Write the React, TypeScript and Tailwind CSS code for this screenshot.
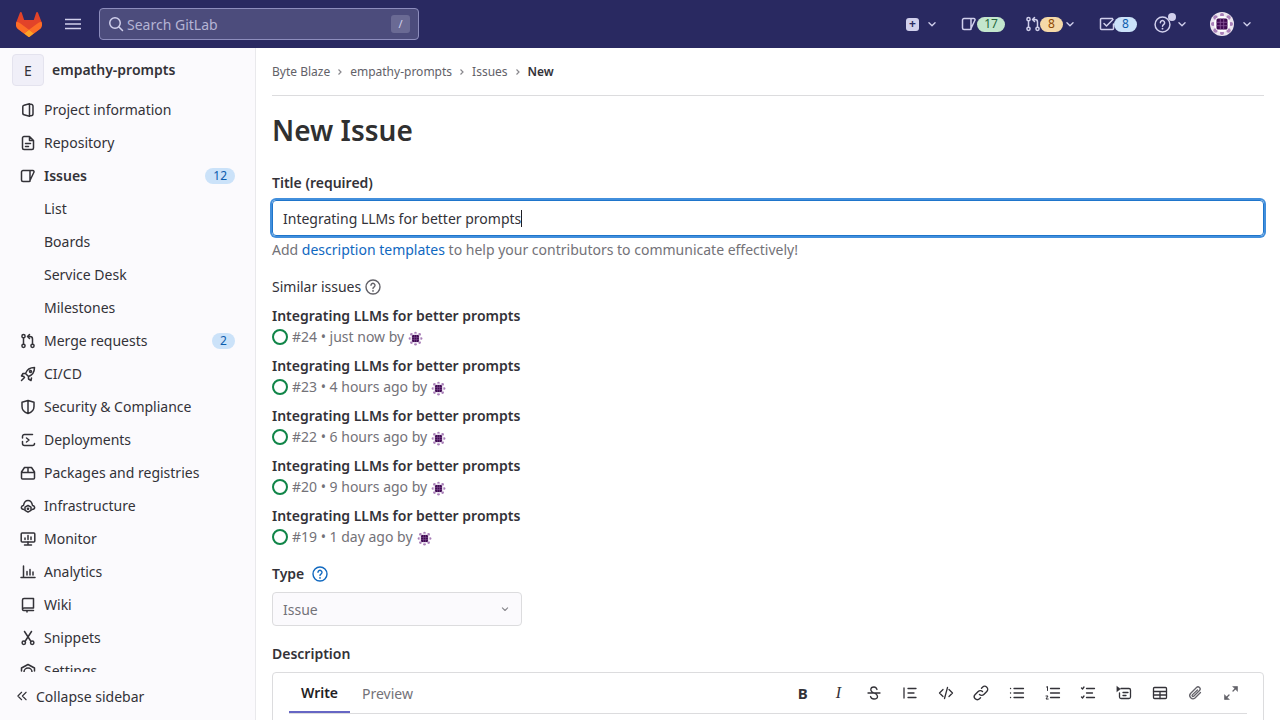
import React from "react";

type IconProps = { className?: string };

function Ico({ className, children }: IconProps & { children: React.ReactNode }) {
  return (
    <svg
      viewBox="0 0 16 16"
      fill="none"
      stroke="currentColor"
      strokeWidth="1.5"
      strokeLinecap="round"
      strokeLinejoin="round"
      className={className ?? "h-4 w-4"}
    >
      {children}
    </svg>
  );
}

const Chevron = ({ className }: IconProps) => (
  <Ico className={className ?? "h-4 w-4"}>
    <path d="M4.5 6.5 8 10l3.5-3.5" />
  </Ico>
);

const IssuesIcon = ({ className }: IconProps) => (
  <Ico className={className}>
    <path d="M3 2.500h9.800a1.200 1.200 0 0 1 1.100 1.800L9.500 13.500H3A1.500 1.500 0 0 1 1.500 12V4A1.500 1.500 0 0 1 3 2.500ZM10 2.700v10.500" />
  </Ico>
);

const MergeIcon = ({ className }: IconProps) => (
  <Ico className={className}>
    <circle cx="3.5" cy="3.2" r="1.6" />
    <circle cx="3.5" cy="12.8" r="1.6" />
    <circle cx="12.5" cy="12.8" r="1.6" />
    <path d="M3.5 5v6M12.5 11V6a2.500 2.500 0 0 0-2.500-2.500H8M9.500 1.500l-2 2 2 2" />
  </Ico>
);

const HelpIcon = ({ className }: IconProps) => (
  <Ico className={className}>
    <circle cx="8" cy="8" r="7" strokeWidth="1.4" />
    <path d="M6 6.300a2 2 0 1 1 3.200 1.600C8.500 8.400 8 8.800 8 9.600" strokeWidth="1.4" />
    <path d="M8 11.800v.1" strokeWidth="1.7" />
  </Ico>
);

const sideIcons: Record<string, React.ReactNode> = {
  info: (
    <Ico>
      <path d="M9.500 1.800 4 3.200a1.500 1.500 0 0 0-1.200 1.400v6.800A1.500 1.500 0 0 0 4 12.800l5.500 1.400V1.800Zm0 .4h1.500a2 2 0 0 1 2 2v7.600a2 2 0 0 1-2 2H9.500" />
    </Ico>
  ),
  repo: (
    <Ico>
      <path d="M9.500 1.500H4A1.500 1.500 0 0 0 2.500 3v10A1.500 1.500 0 0 0 4 14.500h8a1.500 1.500 0 0 0 1.500-1.500V5.500l-4-4ZM9.500 1.500v4h4M5.500 8.500h5M5.500 11.500h3" />
    </Ico>
  ),
  issues: <IssuesIcon />,
  merge: <MergeIcon />,
  cicd: (
    <Ico>
      <path d="M14.500 1.500c-4.500 0-7.500 2-9 6l3 3c4-1.500 6-4.500 6-9ZM5.500 7.500H3l-1.500 2.500 2.500.5M8.500 10.500V13l2.500 1.500.5-2.500M4.500 11.500l-3 3" />
      <circle cx="10.500" cy="5.500" r="1" />
    </Ico>
  ),
  security: (
    <Ico>
      <path d="M8 1.500 14 3.200v4.300c0 3.500-2.500 5.900-6 7-3.500-1.100-6-3.500-6-7V3.200L8 1.500Zm0 0v13" />
    </Ico>
  ),
  deploy: (
    <Ico>
      <path d="M2.500 6V4.500A2 2 0 0 1 4.500 2.500h8M2.500 9.500v2a2 2 0 0 0 2 2h8a2 2 0 0 0 2-2M6.500 6l2.500 2-2.500 2" />
    </Ico>
  ),
  packages: (
    <Ico>
      <path d="M4.500 2.500h7L14.500 7v6a1 1 0 0 1-1 1h-11a1 1 0 0 1-1-1V7l3-4.500ZM1.500 7.500h13M8 2.500v5" />
    </Ico>
  ),
  infra: (
    <Ico>
      <path d="M4 11.500c-1.500 0-3-.8-2.500-2.500.3-1 1-1.500 2-1.500C4 4.500 6 2.500 8 2.500s4 2 4.500 5c1 0 1.700.5 2 1.500.5 1.700-1 2.500-2.500 2.500" />
      <path d="M8 7.500l3 1.700v3.200l-3 1.700-3-1.700V9.200l3-1.700Z" />
      <circle cx="8" cy="10.800" r=".6" />
    </Ico>
  ),
  monitor: (
    <Ico>
      <rect x="1.200" y="2" width="13.600" height="9" rx="1" />
      <path d="M4.500 14h7M8 11v3M5 8.500V7M8 8.500V4.500M11 8.500V6" />
    </Ico>
  ),
  analytics: (
    <Ico>
      <path d="M1 13.500h14M3.500 2v11.500M7 7.500v3.500M10 5.500v5.500M13 8v3" />
    </Ico>
  ),
  wiki: (
    <Ico>
      <path d="M2.500 12V3A1.500 1.500 0 0 1 4 1.500h9.500V11H4a1.500 1.500 0 0 0-1.500 1.500A1.500 1.500 0 0 0 4 13.500h9.500M7 13.500V15" />
    </Ico>
  ),
  snippets: (
    <Ico>
      <circle cx="3.800" cy="12.800" r="1.700" />
      <circle cx="12.200" cy="12.800" r="1.700" />
      <path d="M5 11.500 11.500 1.500M11 11.500 4.500 1.500" />
    </Ico>
  ),
  settings: (
    <Ico>
      <path d="M8 1.500 14.500 5v3M1.500 8V5L8 1.500M4 9a4 4 0 0 1 8 0v5M4 9v5" />
    </Ico>
  ),
};

const navItems = [
  { label: "Project information", icon: "info" },
  { label: "Repository", icon: "repo" },
  { label: "Issues", icon: "issues", active: true, badge: "12" },
  { label: "List" },
  { label: "Boards" },
  { label: "Service Desk" },
  { label: "Milestones" },
  { label: "Merge requests", icon: "merge", badge: "2" },
  { label: "CI/CD", icon: "cicd" },
  { label: "Security & Compliance", icon: "security" },
  { label: "Deployments", icon: "deploy" },
  { label: "Packages and registries", icon: "packages" },
  { label: "Infrastructure", icon: "infra" },
  { label: "Monitor", icon: "monitor" },
  { label: "Analytics", icon: "analytics" },
  { label: "Wiki", icon: "wiki" },
  { label: "Snippets", icon: "snippets" },
  { label: "Settings", icon: "settings" },
];

const similar = [
  { meta: "#24 • just now by" },
  { meta: "#23 • 4 hours ago by" },
  { meta: "#22 • 6 hours ago by" },
  { meta: "#20 • 9 hours ago by" },
  { meta: "#19 • 1 day ago by" },
];

// round user picture: dark square core, petals round it
function Identicon({ className, ring }: { className: string; ring?: boolean }) {
  return (
    <svg viewBox="0 0 24 24" className={className}>
      {ring ? <circle cx="12" cy="12" r="12" fill="#ece6ef" /> : null}
      <g fill="#a97fb8">
        <circle cx="12" cy="3" r="2" />
        <circle cx="12" cy="21" r="2" />
        <circle cx="3" cy="12" r="2" />
        <circle cx="21" cy="12" r="2" />
        <circle cx="5.500" cy="5.500" r="2.200" />
        <circle cx="18.500" cy="5.500" r="2.200" />
        <circle cx="5.500" cy="18.500" r="2.200" />
        <circle cx="18.500" cy="18.500" r="2.200" />
      </g>
      <circle cx="12" cy="12" r="8" fill={ring ? "#ffffff" : "#e9dfee"} />
      <rect x="6.500" y="6.500" width="11" height="11" rx="1.500" fill="#3f0a52" />
      <path d="M10.300 6.500v11M13.700 6.500v11M6.500 10.300h11M6.500 13.700h11" stroke="#8a5a9c" strokeWidth=".8" />
    </svg>
  );
}

function Header() {
  return (
    <header className="flex h-12 shrink-0 items-center bg-[#292961] text-[#d1d0ec]">
      <svg viewBox="0 0 25 24" className="ml-4 h-[25px] w-[26px]">
        <path d="m24.507 9.5-.034-.09L21.082.562a.896.896 0 0 0-1.694.091l-2.29 7.01H7.825L5.535.653a.898.898 0 0 0-1.694-.09L.451 9.411.416 9.5a6.297 6.297 0 0 0 2.09 7.278l.012.01.03.022 5.16 3.867 2.56 1.935 1.554 1.176a1.051 1.051 0 0 0 1.268 0l1.555-1.176 2.56-1.935 5.197-3.89.014-.01A6.297 6.297 0 0 0 24.507 9.5Z" fill="#E24329" />
        <path d="m24.507 9.5-.034-.09a11.44 11.44 0 0 0-4.56 2.051l-7.447 5.632 4.742 3.584 5.197-3.89.014-.01A6.297 6.297 0 0 0 24.507 9.5Z" fill="#FC6D26" />
        <path d="m7.707 20.677 2.56 1.935 1.555 1.176a1.051 1.051 0 0 0 1.268 0l1.555-1.176 2.56-1.935-4.743-3.584-4.755 3.584Z" fill="#FCA326" />
        <path d="M5.01 11.461a11.43 11.43 0 0 0-4.56-2.05L.416 9.5a6.297 6.297 0 0 0 2.09 7.278l.012.01.03.022 5.16 3.867 4.745-3.584-7.444-5.632Z" fill="#FC6D26" />
      </svg>
      <svg viewBox="0 0 16 16" className="ml-[23px] h-4 w-4" fill="none" stroke="currentColor" strokeWidth="1.500">
        <path d="M0 3.500h16M0 8h16M0 12.500h16" />
      </svg>
      <div className="ml-[18px] flex h-8 w-[320px] items-center rounded-[4px] border border-[#8d8dbd] bg-[#4c4c7c] pl-2 pr-2">
        <svg viewBox="0 0 16 16" className="h-4 w-4 text-[#d1d0ec]" fill="none" stroke="currentColor" strokeWidth="1.500" strokeLinecap="round">
          <circle cx="7" cy="7" r="5.250" />
          <path d="m11 11 3.500 3.500" />
        </svg>
        <span className="ml-[3px] text-[14px] text-[#b5b4d4]">Search GitLab</span>
        <span className="ml-auto flex h-[18px] w-[19px] items-center justify-center rounded-[3px] bg-[#6a6a94] text-[11px] text-[#d1d0ec]">/</span>
      </div>

      <div className="ml-[487px] flex items-center">
        <span className="flex h-[13px] w-[13px] items-center justify-center rounded-[3px] bg-[#d1d0ec]">
          <span className="text-[12px] font-bold leading-none text-[#292961]">+</span>
        </span>
        <Chevron className="ml-[6px] h-[14px] w-[14px]" />
        <IssuesIcon className="ml-[22px] h-4 w-4" />
        <span className="flex h-[15px] min-w-[28px] items-center justify-center rounded-full bg-[#c3e6cd] text-[12px] text-[#24663b]">17</span>
        <MergeIcon className="ml-[20px] h-4 w-4" />
        <span className="-ml-px flex h-[15px] min-w-[23px] items-center justify-center rounded-full bg-[#f5d9a8] text-[12px] text-[#8f4700]">8</span>
        <Chevron className="h-[14px] w-[14px]" />
        <Ico className="ml-[22px] h-4 w-4">
          <path d="M14.500 8v4.500a1 1 0 0 1-1 1h-11a1 1 0 0 1-1-1v-9a1 1 0 0 1 1-1h11M5 7.500l2.500 2.500 6.500-6.500" />
        </Ico>
        <span className="-ml-px flex h-[15px] min-w-[23px] items-center justify-center rounded-full bg-[#cbe2f9] text-[12px] text-[#0b5cad]">8</span>
        <span className="relative ml-[17px] flex">
          <HelpIcon className="h-[17px] w-[17px]" />
          <span className="absolute -right-[5px] -top-[3px] h-2 w-2 rounded-full bg-[#d1d0ec]" />
        </span>
        <Chevron className="ml-[4px] h-[14px] w-[14px]" />
        <Identicon className="ml-[21px] h-6 w-6" ring />
        <Chevron className="ml-[6px] h-[14px] w-[14px]" />
      </div>
    </header>
  );
}

function Sidebar() {
  return (
    <aside className="flex w-[256px] shrink-0 flex-col border-r border-[#e9e9ec] bg-[#fbfafd] text-[14px] text-[#333238]">
      <div className="flex h-[45px] shrink-0 items-start pl-3 pt-[6px]">
        <span className="flex h-8 w-8 items-center justify-center rounded-[4px] border border-[#e4e3ee] bg-[#f0eff8] text-[14px] text-[#333238]">E</span>
        <span className="ml-2 font-semibold leading-[31px]">empathy-prompts</span>
      </div>
      <nav className="min-h-0 flex-1 overflow-hidden">
        {navItems.map((item) => (
          <div key={item.label} className="flex h-[33px] items-center pl-5 pr-[20px]">
            <span className="flex w-6 shrink-0 text-[#333238]">{item.icon ? sideIcons[item.icon] : null}</span>
            <span className={item.active ? "font-semibold" : ""}>{item.label}</span>
            {item.badge ? (
              <span className="ml-auto flex h-4 min-w-[23px] items-center justify-center rounded-full bg-[#cbe2f9] px-[8px] text-[12px] text-[#0b5cad]">
                {item.badge}
              </span>
            ) : null}
          </div>
        ))}
      </nav>
      <div className="flex h-12 shrink-0 items-center pl-4">
        <Ico className="h-3 w-3 text-[#333238]">
          <path d="M7.500 3 2.500 8l5 5M13.500 3l-5 5 5 5" />
        </Ico>
        <span className="ml-2">Collapse sidebar</span>
      </div>
    </aside>
  );
}

const toolbar: React.ReactNode[] = [
  <span key="b" className="flex h-4 w-4 items-center justify-center text-[15px] font-bold text-[#333238]">B</span>,
  <span key="i" className="flex h-4 w-4 items-center justify-center text-[16px] italic text-[#333238]" style={{ fontFamily: "'Liberation Serif', serif" }}>I</span>,
  <Ico key="s"><path d="M11 4.500C10.500 3 9.500 2 8 2 6 2 4.800 3.200 4.800 4.700c0 1.300 1 2.300 3.200 3.300 2.500 1 3.500 2 3.500 3.500C11.500 13 10 14 8 14c-1.700 0-3-.8-3.500-2.500M2 8h12" strokeWidth="1.300" /></Ico>,
  <Ico key="q"><path d="M2 3v10M6 3.500h8M6 8h6M6 12.500h8" strokeWidth="1.300" /></Ico>,
  <Ico key="c"><path d="M5 4.500 1.500 8 5 11.500M11 4.500 14.500 8 11 11.500M9.500 2.500l-3 11" strokeWidth="1.300" /></Ico>,
  <Ico key="l"><path d="M6.500 9.500a3 3 0 0 0 4.300 0l3-3a3 3 0 0 0-4.300-4.300L8.500 3.200M9.500 6.500a3 3 0 0 0-4.300 0l-3 3a3 3 0 0 0 4.300 4.300l1-1" strokeWidth="1.400" /></Ico>,
  <Ico key="ul"><path d="M1.500 3.500h.1M1.500 8h.1M1.500 12.500h.1M5 3.500h9.500M5 8h9.500M5 12.500h9.500" strokeWidth="1.300" /></Ico>,
  <Ico key="ol"><path d="M5.500 3.500h9M5.500 8h9M5.500 12.500h9" strokeWidth="1.300" /><path d="M1.500 2 2.500 1.500V5.500M1 11h2l-2 3h2.200" strokeWidth="1" /></Ico>,
  <Ico key="tl"><path d="M6.500 3.500h8M6.500 8h6M6.500 12.500h8M1.500 3l1 1 1.500-2M1.500 12l1 1 1.500-2" strokeWidth="1.300" /></Ico>,
  <Ico key="ci">
    <path d="M5 3.500h8a1.500 1.500 0 0 1 1.500 1.500v7a1.500 1.500 0 0 1-1.500 1.500H5A1.500 1.500 0 0 1 3.500 12V8M7 7.500h5M7 10.500h3" strokeWidth="1.300" />
    <path d="M1 1.500 4.500 4 1 6.500Z" fill="currentColor" strokeWidth="0.500" />
  </Ico>,
  <Ico key="t"><rect x="1.500" y="2.500" width="13" height="11" rx="1" strokeWidth="1.300" /><path d="M1.500 6.500h13M1.500 10h13M8 6.500v7" strokeWidth="1.300" /></Ico>,
  <span key="a" className="flex text-[#626168]">
    <Ico><path d="M13.500 7.500 8 13a3.200 3.200 0 0 1-4.500-4.500l6-6a2.100 2.100 0 0 1 3 3l-5.800 5.800a1 1 0 0 1-1.400-1.400L10.500 5" strokeWidth="1.300" /></Ico>
  </span>,
  <span key="f" className="flex text-[#626168]">
    <Ico>
      <path d="M10 6 13.500 2.500M6 10 2.500 13.500" strokeWidth="1.300" />
      <path d="M10 1.500h4.500V6ZM1.500 10v4.500H6Z" fill="currentColor" strokeWidth="0.600" />
    </Ico>
  </span>,
];

function Main() {
  return (
    <main className="min-w-0 flex-1 overflow-hidden pl-4 pr-4 text-[14px] text-[#333238]">
      <div className="flex h-12 items-center border-b border-[#dcdcde] text-[12px] text-[#626168]">
        <span>Byte Blaze</span>
        <BreadSep />
        <span>empathy-prompts</span>
        <BreadSep />
        <span>Issues</span>
        <BreadSep />
        <span className="font-semibold text-[#333238]">New</span>
      </div>
      <h1 className="mt-[16px] text-[28px] font-semibold leading-9 text-[#303030]">New Issue</h1>

      <label className="mt-[25px] block font-semibold leading-5">Title (required)</label>
      <div className="mt-[7px] flex h-9 items-center rounded-[4px] border border-[#1f75cb] px-[10px] text-[#333238] shadow-[0_0_0_2px_#428fdc]">
        <span>Integrating LLMs for better prompts</span>
        <span className="h-[17px] w-px bg-[#1f1e24]" />
      </div>
      <p className="mt-[4px] leading-5 text-[#737278]">
        Add <span className="text-[#1068bf]">description templates</span> to help your contributors to communicate effectively!
      </p>

      <div className="mt-[17px] flex items-center leading-5">
        <span>Similar issues</span>
        <HelpIcon className="ml-[4px] h-4 w-4 text-[#626168]" />
      </div>
      <ul className="mt-[8px]">
        {similar.map((row) => (
          <li key={row.meta} className="mb-[8px] leading-[21px]">
            <div className="font-semibold">Integrating LLMs for better prompts</div>
            <div className="flex h-[21px] items-center text-[#737278]">
              <span className="mr-[4px] h-4 w-4 rounded-full border-2 border-[#108548]" />
              <span>{row.meta}</span>
              <Identicon className="ml-[4px] mt-[4px] h-[15px] w-[15px]" />
            </div>
          </li>
        ))}
      </ul>

      <div className="mt-[17px] flex items-center leading-5">
        <span className="font-semibold">Type</span>
        <HelpIcon className="ml-[8px] h-4 w-4 text-[#1068bf]" />
      </div>
      <div className="mt-[8px] flex h-[34px] w-[250px] items-center justify-between rounded-[4px] border border-[#dcdcde] bg-[#fbfafd] pl-[10px] pr-[10px] text-[#737278]">
        <span>Issue</span>
        <Chevron className="h-3 w-3 text-[#89888d]" />
      </div>

      <div className="mt-[18px] font-semibold leading-5">Description</div>
      <div className="mt-[8px] h-[100px] rounded-[4px] border border-[#dcdcde] px-4">
        <div className="flex h-[41px] items-center justify-between border-b border-[#dcdcde]">
          <div className="flex h-full items-center">
            <span className="flex h-full w-[61px] items-center justify-center border-b-2 border-[#6666c4] font-semibold text-[#1f1e24]">Write</span>
            <span className="ml-3 text-[#737278]">Preview</span>
          </div>
          <div className="mr-[8px] flex items-center gap-[19.700px] text-[#333238]">{toolbar}</div>
        </div>
      </div>
    </main>
  );
}

function BreadSep() {
  return (
    <svg viewBox="0 0 16 16" className="mx-[2px] h-4 w-4 text-[#89888d]" fill="none" stroke="currentColor" strokeWidth="1.200">
      <path d="m6.500 5.500 2.500 2.500-2.500 2.500" />
    </svg>
  );
}

export default function App() {
  return (
    <div
      className="flex h-screen flex-col overflow-hidden bg-white"
      style={{ fontFamily: "'Noto Sans', sans-serif" }}
    >
      <Header />
      <div className="flex min-h-0 flex-1">
        <Sidebar />
        <Main />
      </div>
    </div>
  );
}
